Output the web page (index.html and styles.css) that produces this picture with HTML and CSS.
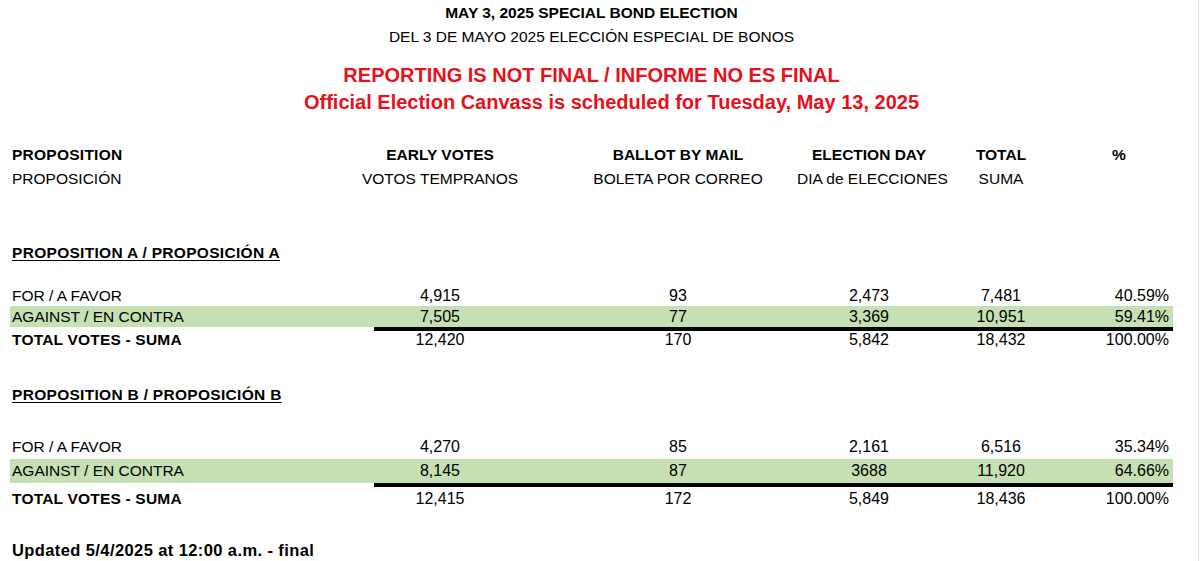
FILE: index.html
```html
<!DOCTYPE html>
<html lang="en">
<head>
<meta charset="utf-8">
<title>May 3, 2025 Special Bond Election</title>
<link rel="stylesheet" href="styles.css">
</head>
<body>
<div class="sheet">
  <header class="titles">
    <div class="title">MAY 3, 2025 SPECIAL BOND ELECTION</div>
    <div class="subtitle">DEL 3 DE MAYO 2025 ELECCIÓN ESPECIAL DE BONOS</div>
    <div class="warn warn-1">REPORTING IS NOT FINAL / INFORME NO ES FINAL</div>
    <div class="warn warn-2">Official Election Canvass is scheduled for Tuesday, May 13, 2025</div>
  </header>

  <div class="row head head-1">
    <div class="lbl">PROPOSITION</div>
    <div class="c">EARLY VOTES</div>
    <div class="c">BALLOT BY MAIL</div>
    <div class="c">ELECTION DAY</div>
    <div class="c">TOTAL</div>
    <div class="c pcth">%</div>
  </div>
  <div class="row head head-2">
    <div class="lbl">PROPOSICIÓN</div>
    <div class="c">VOTOS TEMPRANOS</div>
    <div class="c">BOLETA POR CORREO</div>
    <div class="c">DIA de ELECCIONES</div>
    <div class="c">SUMA</div>
    <div class="c"></div>
  </div>

  <section class="prop prop-a">
    <div class="prop-title">PROPOSITION A / PROPOSICIÓN A</div>
    <div class="row data for">
      <div class="lbl">FOR / A FAVOR</div>
      <div class="c n">4,915</div>
      <div class="c n">93</div>
      <div class="c n">2,473</div>
      <div class="c n">7,481</div>
      <div class="r n">40.59%</div>
    </div>
    <div class="row data against">
      <div class="lbl">AGAINST / EN CONTRA</div>
      <div class="c n">7,505</div>
      <div class="c n">77</div>
      <div class="c n">3,369</div>
      <div class="c n">10,951</div>
      <div class="r n">59.41%</div>
    </div>
    <div class="rule"></div>
    <div class="row data total">
      <div class="lbl">TOTAL VOTES - SUMA</div>
      <div class="c n">12,420</div>
      <div class="c n">170</div>
      <div class="c n">5,842</div>
      <div class="c n">18,432</div>
      <div class="r n">100.00%</div>
    </div>
  </section>

  <section class="prop prop-b">
    <div class="prop-title">PROPOSITION B / PROPOSICIÓN B</div>
    <div class="row data for">
      <div class="lbl">FOR / A FAVOR</div>
      <div class="c n">4,270</div>
      <div class="c n">85</div>
      <div class="c n">2,161</div>
      <div class="c n">6,516</div>
      <div class="r n">35.34%</div>
    </div>
    <div class="row data against">
      <div class="lbl">AGAINST / EN CONTRA</div>
      <div class="c n">8,145</div>
      <div class="c n">87</div>
      <div class="c n">3688</div>
      <div class="c n">11,920</div>
      <div class="r n">64.66%</div>
    </div>
    <div class="rule"></div>
    <div class="row data total">
      <div class="lbl">TOTAL VOTES - SUMA</div>
      <div class="c n">12,415</div>
      <div class="c n">172</div>
      <div class="c n">5,849</div>
      <div class="c n">18,436</div>
      <div class="r n">100.00%</div>
    </div>
  </section>

  <div class="updated">Updated 5/4/2025 at 12:00 a.m. - final</div>
</div>
</body>
</html>
```

FILE: styles.css
```css
html, body {
  margin: 0;
  padding: 0;
  background: #fff;
}

body {
  font-family: "Liberation Sans", Arial, sans-serif;
  font-size: 15.5px;
  color: #000;
}

.sheet {
  width: 1198px;
  height: 561px;
  border-right: 1px solid #dcdcdc;
  overflow: hidden;
}

/* titles */
.titles {
  width: 1183px;
  text-align: center;
  padding-top: 1px;
}

.title {
  font-weight: bold;
  line-height: 24px;
}

.subtitle {
  line-height: 24px;
}

.warn {
  color: #e8101a;
  font-weight: bold;
  font-size: 20px;
  line-height: 27px;
}

.warn-1 {
  margin-top: 13px;
}

.warn-2 {
  padding-left: 40px;
}

/* grid rows */
.row {
  display: grid;
  grid-template-columns: 309px 238px 238px 144px 120px 108px;
  margin: 0 10px;
  padding: 0 4px 0 2px;
  width: 1157px;
}

.c {
  text-align: center;
  white-space: nowrap;
}

.r {
  text-align: right;
  white-space: nowrap;
}

.lbl {
  white-space: nowrap;
}

.n {
  font-size: 16px;
}

.head {
  line-height: 24px;
}

.head-1 {
  margin-top: 27px;
  font-weight: bold;
}

.head-1 .lbl {
  letter-spacing: 0.25px;
}

.pcth {
  padding-left: 8px;
}

/* proposition sections */
.prop-title {
  font-weight: bold;
  text-decoration: underline;
  text-underline-offset: 2px;
  line-height: 24px;
  padding-left: 12px;
  letter-spacing: 0.3px;
}

.prop-a .prop-title {
  margin-top: 50px;
}

.prop-b .prop-title {
  margin-top: 34px;
}

.prop-a .for {
  margin-top: 21px;
  line-height: 20px;
}

.prop-a .against {
  line-height: 21px;
}

.prop-a .total {
  line-height: 18px;
}

.prop-b .for {
  margin-top: 28px;
  line-height: 24px;
}

.prop-b .against {
  line-height: 24px;
}

.prop-b .total {
  line-height: 23px;
}

.against {
  background: #c6e0b4;
}

.total .lbl {
  font-weight: bold;
  letter-spacing: 0.2px;
}

.rule {
  margin-left: 374px;
  width: 799px;
  height: 4px;
  background: #000;
}

.updated {
  font-weight: bold;
  font-size: 16.5px;
  letter-spacing: 0.4px;
  line-height: 24px;
  padding-left: 12px;
  margin-top: 28px;
}
```
